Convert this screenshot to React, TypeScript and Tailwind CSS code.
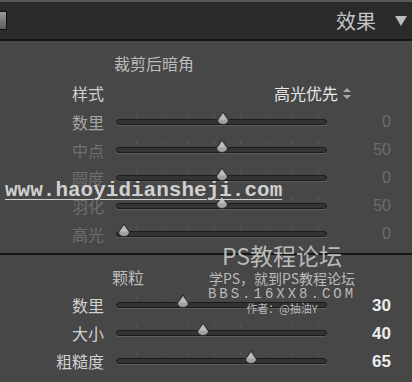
import React from 'react';

const cjk = { fontFamily: '"Noto Sans CJK SC", "Noto Sans", sans-serif' };

interface Row { label: string; pos: number; value: string; dim?: boolean; strong?: boolean; }

const vignette: Row[] = [
  { label: '数里', pos: 107, value: '0' },
  { label: '中点', pos: 106, value: '50', dim: true },
  { label: '圆度', pos: 106, value: '0', dim: true },
  { label: '羽化', pos: 106, value: '50', dim: true },
  { label: '高光', pos: 8, value: '0', dim: true },
];

const grain: Row[] = [
  { label: '数里', pos: 67, value: '30', strong: true },
  { label: '大小', pos: 87, value: '40', strong: true },
  { label: '粗糙度', pos: 135, value: '65', strong: true },
];

const ticks = [8, 34, 60, 86, 112, 138, 164, 190];

const Thumb = ({ left }: { left: number }) => (
  <svg className="absolute top-[-8px]" style={{ left: left - 8 }} width="16" height="16" viewBox="0 0 16 16">
    <path d="M8 1 L13.5 9 A5.5 4.5 0 0 1 2.5 9 Z" fill="#a2a2a2" stroke="#262626" strokeWidth="1" />
    <path d="M8 3 L11.5 8.5 L4.5 8.5 Z" fill="#bdbdbd" />
  </svg>
);

const SliderRow = ({ row }: { row: Row }) => {
  const labelColor = row.strong ? 'text-[#d2d2d2]' : row.dim ? 'text-[#6e6e6e]' : 'text-[#a6a6a6]';
  const valueColor = row.strong ? 'text-[#ececec] font-bold text-[17px]' : 'text-[#6c6c6c] text-[16px]';
  return (
    <div className="flex h-[28px] items-center">
      <div className={`w-[104px] text-right text-[16px] leading-none ${labelColor}`} style={cjk}>{row.label}</div>
      <div className="relative ml-[12px] h-[6px] w-[211px]">
        {ticks.map((t) => (
          <div key={t} className="absolute top-[-5px] h-[2px] w-px bg-[#5e5e5e]" style={{ left: t + 12 }} />
        ))}
        <div className="h-[6px] w-full rounded-full border border-[#1c1c1c] bg-[#333333] shadow-[0_1px_0_#5d5d5d]" />
        <Thumb left={row.pos} />
      </div>
      <div
        className={`ml-auto pr-[21px] leading-none ${valueColor}`}
        style={{ fontFamily: '"Liberation Sans", Arial, sans-serif' }}
      >
        {row.value}
      </div>
    </div>
  );
};

export default function App() {
  return (
    <div className="relative h-[382px] w-[412px] overflow-hidden bg-[#474747]" style={cjk}>
      {/* panel header */}
      <div className="border-t-2 border-[#575757]">
        <div className="flex h-[39px] items-center border-b-2 border-[#151515] bg-[#2a2a2a]">
          <div className="ml-[-6px] h-[19px] w-[13px] border border-[#111] bg-gradient-to-b from-[#9a9a9a] to-[#5a5a5a]" />
          <span className="ml-auto text-[20px] leading-none text-[#c4c4c4]">效果</span>
          <svg className="ml-[18px] mr-[4px]" width="14" height="12" viewBox="0 0 14 12">
            <path d="M1 1 L13 1 L7 11 Z" fill="#bcbcbc" />
          </svg>
        </div>
      </div>

      {/* post-crop vignetting */}
      <div className="pt-[7px]">
        <div className="flex h-[30px] items-center pl-[114px] text-[16px] leading-none text-[#bdbdbd]">裁剪后暗角</div>
        <div className="flex h-[30px] items-center">
          <div className="w-[104px] text-right text-[16px] leading-none text-[#cfcfcf]">样式</div>
          <div className="ml-[170px] flex items-center text-[16px] leading-none text-[#e6e6e6]">
            高光优先
            <svg className="ml-[5px]" width="8" height="11" viewBox="0 0 8 11">
              <path d="M4 0 L8 4 L0 4 Z M0 7 L8 7 L4 11 Z" fill="#a8a8a8" />
            </svg>
          </div>
        </div>
        {vignette.map((r) => (
          <SliderRow key={r.label + r.value} row={r} />
        ))}
      </div>

      <div className="mt-[5px] h-[2px] bg-[#161616]" />

      {/* grain */}
      <div className="pt-[8px]">
        <div className="flex h-[28px] items-center pl-[112px] text-[16px] leading-none text-[#bdbdbd]">颗粒</div>
        {grain.map((r) => (
          <SliderRow key={r.label} row={r} />
        ))}
      </div>

      {/* watermarks */}
      <div
        className="absolute left-[5px] top-[180px] text-[21px] font-bold leading-none text-[#d0d0d0] underline decoration-1 underline-offset-[3px]"
        style={{ fontFamily: '"Liberation Mono", "Courier New", monospace' }}
      >
        www.haoyidiansheji.com
      </div>
      <div className="absolute left-[206px] top-[241px] flex w-[152px] flex-col items-center text-[#bababa]">
        <div className="text-[23px] leading-[29px]">PS教程论坛</div>
        <div className="text-[14px] leading-[16px]">学PS，就到PS教程论坛</div>
        <div className="text-[14px] leading-[16px] tracking-[3px]" style={{ fontFamily: '"Liberation Mono", monospace' }}>BBS.16XX8.COM</div>
        <div className="text-[11px] leading-[13px]">作者：@抽油Y</div>
      </div>
    </div>
  );
}
